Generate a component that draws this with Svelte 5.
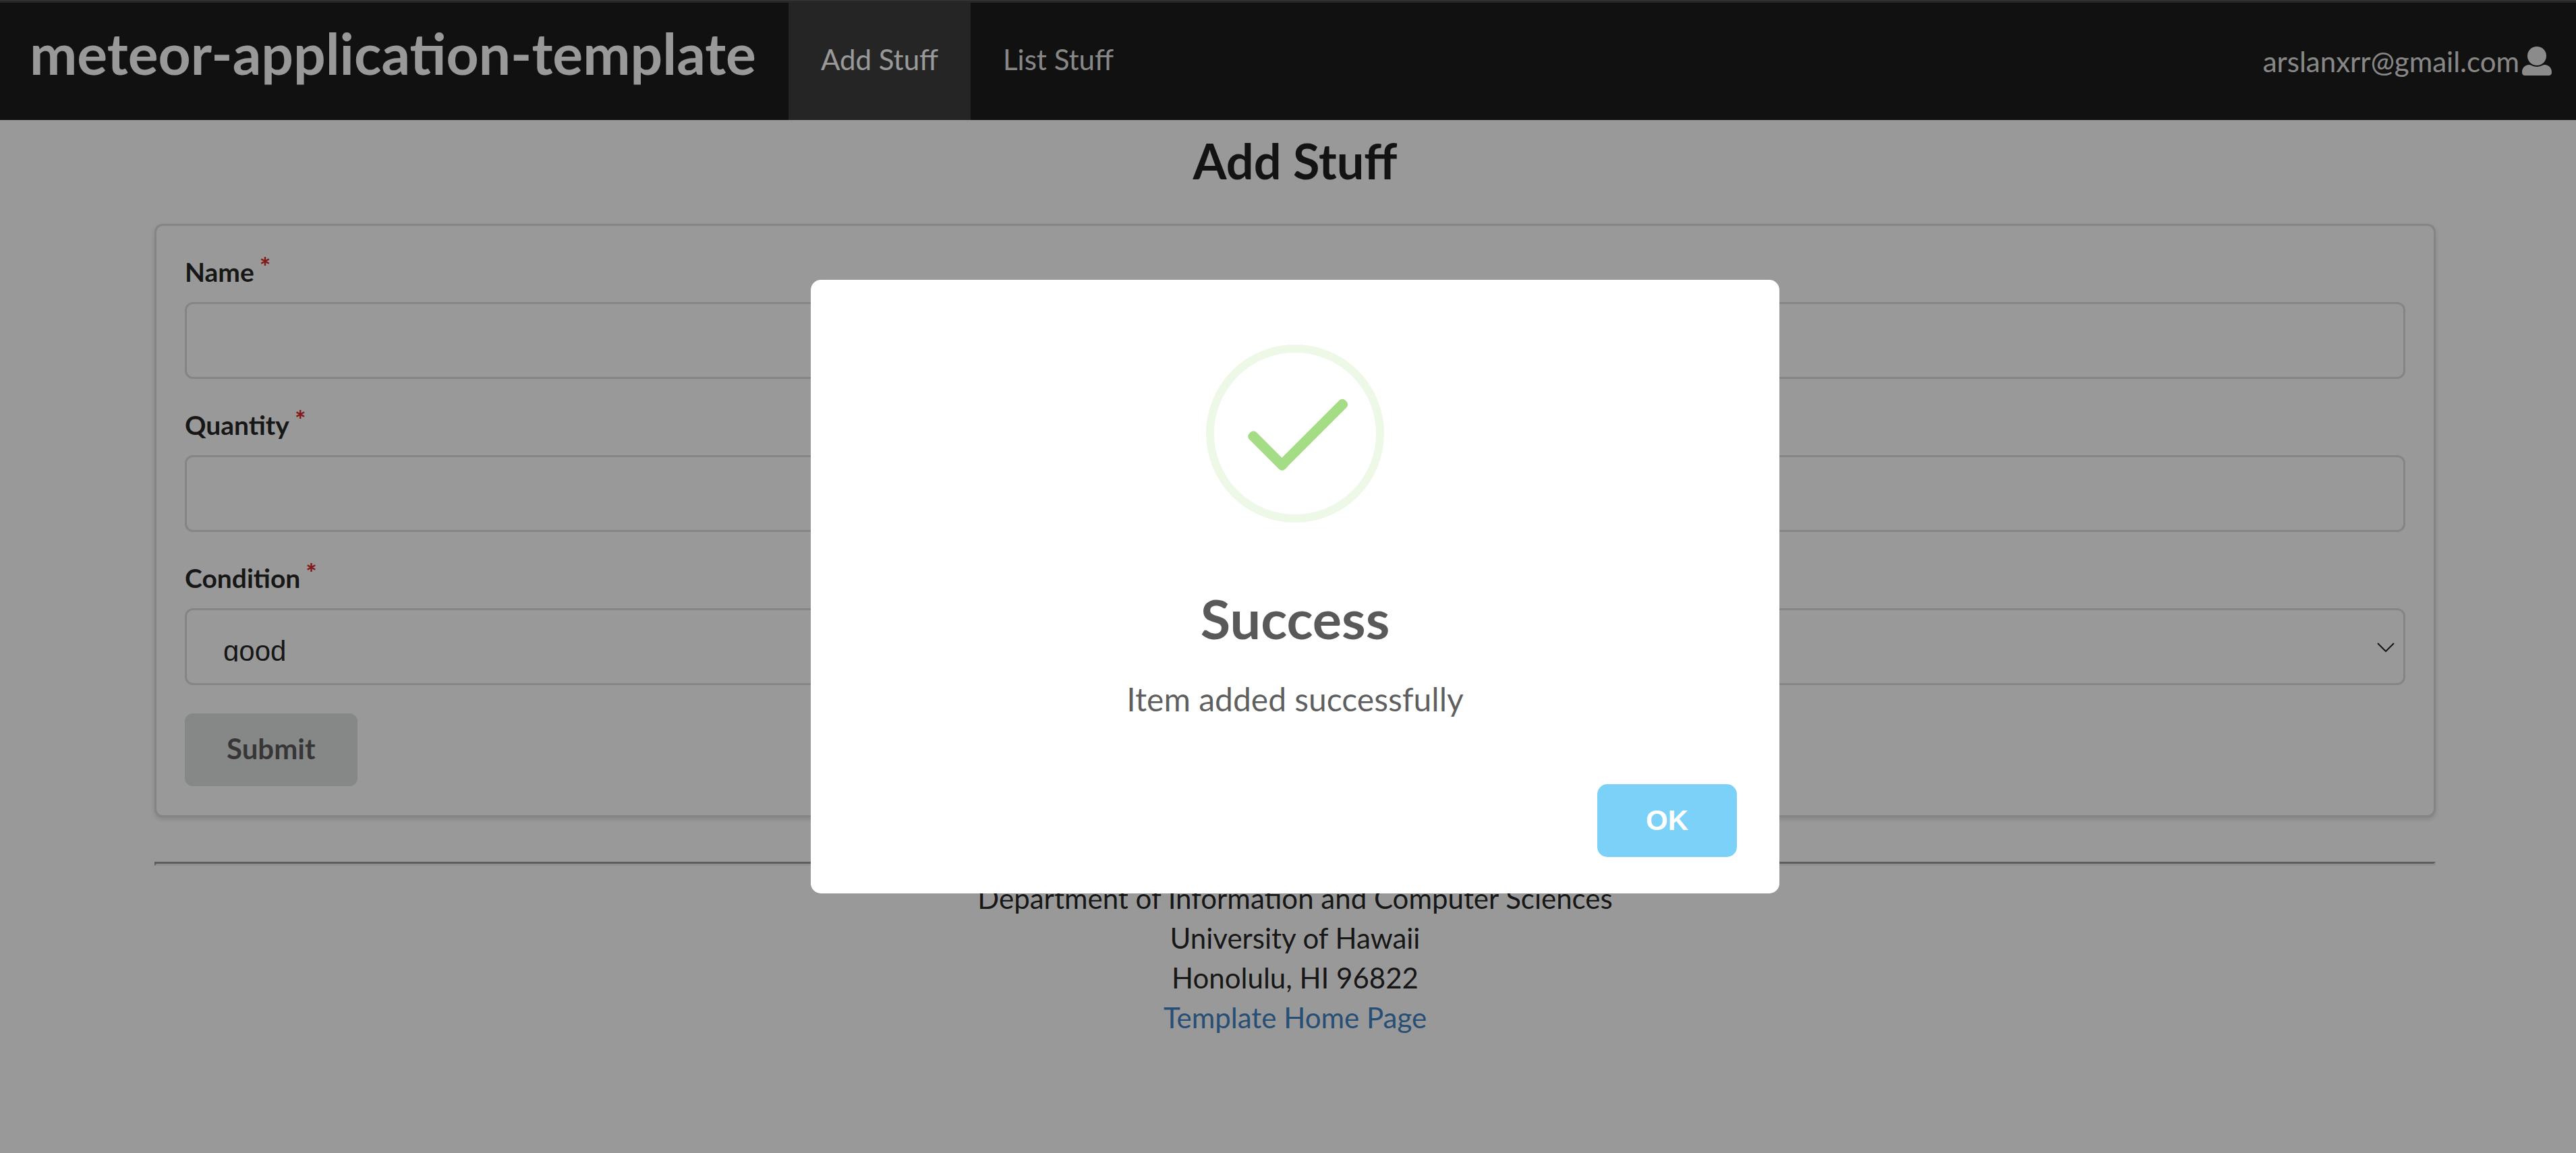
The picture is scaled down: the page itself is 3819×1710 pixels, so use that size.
<script>
  let name = $state('');
  let quantity = $state('');
  let condition = $state('good');
  let open = $state(true);
  const conditions = ['excellent', 'good', 'fair', 'poor'];
</script>

<div class="window">
  <div class="edge"></div>
  <div class="app">
    <nav class="menu">
      <a class="brand" href="#home"><h1>meteor-application-template</h1></a>
      <a class="item active" href="#add">Add Stuff</a>
      <a class="item" href="#list">List Stuff</a>
      <button class="user" type="button">
        <span>arslanxrr@gmail.com</span>
        <svg viewBox="0 0 44 44" aria-hidden="true">
          <circle cx="22" cy="14" r="14" />
          <path d="M11 27C13 27 16 30 22 30C28 30 31 27 33 27C40 27 44 32 44 38C44 42 42 43 39 43H5C2 43 0 42 0 38C0 32 4 27 11 27Z" />
        </svg>
      </button>
    </nav>

    <main class="container">
      <h2>Add Stuff</h2>
      <form class="segment" onsubmit={(e) => e.preventDefault()}>
        <div class="field">
          <label for="name">Name<span class="star">*</span></label>
          <input id="name" type="text" bind:value={name} />
        </div>
        <div class="field">
          <label for="quantity">Quantity<span class="star">*</span></label>
          <input id="quantity" type="text" bind:value={quantity} />
        </div>
        <div class="field">
          <label for="condition">Condition<span class="star">*</span></label>
          <div class="select">
            <select id="condition" bind:value={condition}>
              {#each conditions as option}
                <option value={option}>{option}</option>
              {/each}
            </select>
            <svg viewBox="0 0 26 14" aria-hidden="true"><path d="M1 1L13 13L25 1" /></svg>
          </div>
        </div>
        <button class="submit" type="submit">Submit</button>
      </form>
    </main>

    <footer class="container">
      <hr />
      <p>Department of Information and Computer Sciences</p>
      <p>University of Hawaii</p>
      <p>Honolulu, HI 96822</p>
      <p><a href="#template">Template Home Page</a></p>
    </footer>

    {#if open}
      <div class="overlay">
        <div class="modal" role="dialog" aria-modal="true" aria-labelledby="modal-title">
          <svg class="success" viewBox="0 0 88 88" aria-hidden="true">
            <circle cx="44" cy="44" r="42" />
            <rect x="18" y="50" width="25" height="5" rx="2" transform="rotate(45 30.5 52.5)" />
            <rect x="29" y="42" width="47" height="5" rx="2" transform="rotate(-45 52.5 44.5)" />
          </svg>
          <h3 id="modal-title">Success</h3>
          <p class="message">Item added successfully</p>
          <button class="ok" type="button" onclick={() => (open = false)}>OK</button>
        </div>
      </div>
    {/if}
  </div>
</div>

<style>
  :global(body) {
    background: #999;
  }
  * {
    box-sizing: border-box;
  }
  .window {
    display: flex;
    flex-direction: column;
    min-height: 100vh;
    overflow: hidden;
    font-family: Lato, 'Open Sans', sans-serif;
    font-size: 42px;
    line-height: 59px;
    color: rgba(0, 0, 0, 0.87);
  }
  .edge {
    height: 4px;
    background: #282828;
    border-top: 1px solid #35353b;
  }
  .app {
    position: relative;
    flex: 1;
    margin-right: -21px;
    background: #fff;
  }
  h1, h2, h3, p {
    margin: 0;
  }
  a {
    color: #4183c4;
    text-decoration: none;
  }
  button {
    border: 0;
    font: inherit;
    cursor: pointer;
  }

  .menu {
    display: flex;
    height: 174px;
    background: #1b1d1c;
  }
  .menu a, .user {
    display: flex;
    align-items: center;
    padding: 0 48px 5px;
    color: rgba(255, 255, 255, 0.9);
  }
  .menu .brand {
    padding: 0 48px 24px 44px;
    color: #fff;
  }
  h1 {
    font-size: 84px;
    line-height: 108px;
  }
  .menu .active {
    background: #3e3e3e;
    color: #fff;
  }
  .user {
    gap: 4px;
    margin-left: auto;
    padding: 0 57px 0 48px;
    background: none;
  }
  .user svg {
    width: 44px;
    height: 44px;
    fill: currentColor;
  }

  .container {
    max-width: 3382px;
    margin: 0 auto;
  }
  h2 {
    padding: 14px 0 47px;
    font-size: 72px;
    line-height: 93px;
    text-align: center;
  }
  .segment {
    display: flex;
    flex-direction: column;
    align-items: flex-start;
    gap: 42px;
    padding: 42px 42px 43px;
    border: 3px solid rgba(34, 36, 38, 0.15);
    border-radius: 12px;
    box-shadow: 0 3px 6px rgba(34, 36, 38, 0.15);
  }
  .field {
    width: 100%;
  }
  label {
    display: flex;
    align-items: flex-start;
    gap: 8px;
    margin-bottom: 18px;
    font-size: 39px;
    font-weight: 700;
    line-height: 53px;
  }
  .star {
    margin-top: -8px;
    color: #db2828;
  }
  input, select {
    display: block;
    width: 100%;
    height: 114px;
    padding: 0 42px;
    border: 3px solid rgba(34, 36, 38, 0.15);
    border-radius: 12px;
    background: #fff;
    color: inherit;
    font: inherit;
    outline: 0;
  }
  .select {
    position: relative;
  }
  select {
    appearance: none;
    padding: 37px 54px 32px;
    font-family: 'Liberation Sans', sans-serif;
    line-height: normal;
  }
  .select svg {
    position: absolute;
    top: 51px;
    right: 16px;
    width: 26px;
    height: 14px;
    fill: none;
    stroke: #222;
    stroke-width: 2;
    pointer-events: none;
  }
  .submit {
    height: 108px;
    padding: 0 62px 4px;
    border-radius: 12px;
    background: #e0e1e2;
    color: rgba(0, 0, 0, 0.6);
    font-weight: 700;
  }

  footer {
    padding-top: 66px;
    text-align: center;
  }
  hr {
    height: 6px;
    margin: 0 0 19px;
    border: 3px solid;
    border-color: #9d9d9d #eee #eee #9d9d9d;
  }

  .overlay {
    position: absolute;
    inset: 0;
    display: flex;
    align-items: center;
    justify-content: center;
    padding-top: 26px;
    background: rgba(0, 0, 0, 0.4);
  }
  .modal {
    display: flex;
    flex-direction: column;
    align-items: center;
    width: 1436px;
    padding: 96px 63px 54px;
    border-radius: 15px;
    background: #fff;
    text-align: center;
  }
  .success {
    width: 264px;
    height: 264px;
    fill: #a5dc86;
  }
  .success circle {
    fill: none;
    stroke: #edf8e7;
    stroke-width: 4;
  }
  h3 {
    margin-top: 93px;
    color: rgba(0, 0, 0, 0.65);
    font-size: 81px;
    font-weight: 700;
    line-height: 98px;
  }
  .message {
    margin: 41px 0 97px;
    color: rgba(0, 0, 0, 0.64);
    font-size: 48px;
  }
  .ok {
    align-self: flex-end;
    width: 207px;
    height: 108px;
    border-radius: 15px;
    background: #7cd1f9;
    color: #fff;
    font: 700 42px 'Liberation Sans', sans-serif;
  }
</style>
